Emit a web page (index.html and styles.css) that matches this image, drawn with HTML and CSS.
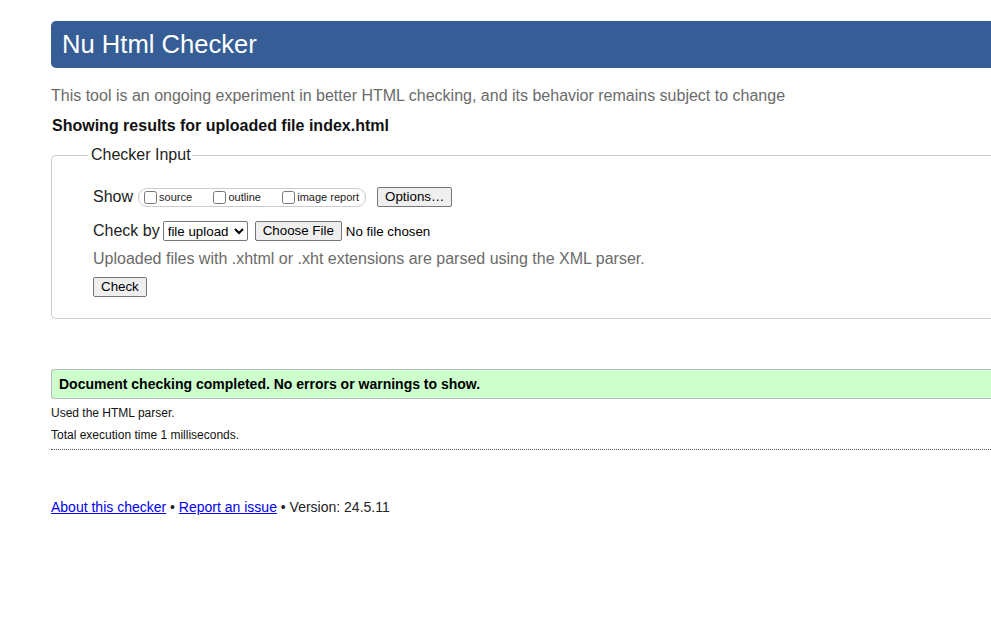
FILE: index.html
```html
<!DOCTYPE html>
<html lang="en">
<head>
<meta charset="utf-8">
<title>Showing results for uploaded file index.html - Nu Html Checker</title>
<link rel="stylesheet" href="styles.css">
</head>
<body>
<div class="page">
  <h1 class="banner">Nu Html Checker</h1>
  <p class="tagline">This tool is an ongoing experiment in better HTML checking, and its behavior remains subject to change</p>
  <p class="showing">Showing results for uploaded file index.html</p>

  <fieldset class="input-box">
    <legend>Checker Input</legend>
    <div class="row show-row">
      <span class="label">Show</span>
      <span class="opts">
        <label class="opt"><input type="checkbox">source</label>
        <label class="opt"><input type="checkbox">outline</label>
        <label class="opt"><input type="checkbox">image report</label>
      </span>
      <button class="btn">Options…</button>
    </div>
    <div class="row by-row">
      <span class="label">Check by</span>
      <select class="sel"><option>file upload</option></select>
      <button class="btn choose">Choose File</button>
      <span class="nofile">No file chosen</span>
    </div>
    <p class="hint">Uploaded files with .xhtml or .xht extensions are parsed using the XML parser.</p>
    <div class="row"><button class="btn">Check</button></div>
  </fieldset>

  <div class="success">Document checking completed. No errors or warnings to show.</div>
  <p class="stat">Used the HTML parser.</p>
  <p class="stat">Total execution time 1 milliseconds.</p>
  <div class="sep"></div>

  <p class="footer"><a href="#">About this checker</a> • <a href="#">Report an issue</a> • Version: 24.5.11</p>
</div>
</body>
</html>
```

FILE: styles.css
```css
html, body {
  margin: 0;
  padding: 0;
  background: #fff;
  overflow: hidden;
}
body {
  font-family: "Liberation Sans", Arial, sans-serif;
  color: #111;
}
.page {
  padding: 21px 0 0 51px;
  display: flex;
  flex-direction: column;
}
.banner {
  margin: 0;
  background: #365d96;
  color: #fff;
  font-weight: normal;
  font-size: 25.6px;
  line-height: 47px;
  height: 47px;
  padding-left: 11px;
  border-radius: 5px 0 0 5px;
}
.tagline {
  margin: 18px 0 0;
  font-size: 16px;
  line-height: 20px;
  color: #6b6b6b;
}
.showing {
  margin: 10px 0 0 1px;
  font-size: 16px;
  line-height: 20px;
  font-weight: bold;
  color: #111;
}
.input-box {
  margin: 10px 0 0;
  border: 1px solid #ccc;
  border-right: none;
  border-radius: 5px 0 0 5px;
  padding: 21px 0 21px 41px;
  min-inline-size: 0;
}
.input-box legend {
  margin-left: -5px;
  padding: 0 1px 0 3px;
  font-size: 16px;
  color: #222;
}
.row {
  display: flex;
  align-items: center;
}
.label {
  font-size: 16px;
  color: #222;
}
.show-row {
  height: 24px;
}
.show-row .label {
  margin-right: 5px;
}
.opts {
  display: inline-flex;
  align-items: center;
  height: 17px;
  border: 1px solid #ccc;
  border-radius: 9px;
  padding: 0 6px 0 5px;
  width: 215px;
  justify-content: space-between;
}
.opt {
  display: inline-flex;
  align-items: center;
  font-size: 11px;
  color: #222;
  margin-right: 8px;
}
.opt:last-child { margin-right: 0; }
.opt input {
  margin: 0 2px 0 0;
  width: 13px;
  height: 13px;
}
.btn {
  font-family: "Liberation Sans", Arial, sans-serif;
  font-size: 13.33px;
  line-height: 16px;
  background: #efefef;
  color: #000;
  border: 1px solid #767676;
  border-radius: 2px;
  padding: 1px 7px;
  margin: 0;
}
.show-row .btn {
  margin-left: 11px;
}
.by-row {
  margin-top: 10px;
  height: 24px;
}
.by-row .label {
  margin-right: 3px;
}
.sel {
  font-family: "Liberation Sans", Arial, sans-serif;
  font-size: 13.33px;
  height: 20px;
  width: 85px;
  border: 1px solid #767676;
  border-radius: 2px;
  background: #fff;
  color: #000;
  padding: 0;
  margin: 0 7px 0 0;
}
.choose {
  padding: 1px 7px;
}
.nofile {
  font-size: 13.33px;
  margin-left: 4px;
  color: #000;
}
.hint {
  margin: 5px 0 7px;
  font-size: 16px;
  line-height: 22px;
  color: #6b6b6b;
}
.success {
  margin-top: 50px;
  background: #ccffcc;
  border: 1px solid #bbb;
  border-right: none;
  border-radius: 3px 0 0 3px;
  padding: 0 0 0 7px;
  height: 28px;
  line-height: 28px;
  font-size: 14px;
  font-weight: bold;
  color: #000;
}
.stat {
  margin: 6px 0 0;
  font-size: 12px;
  line-height: 17px;
  color: #111;
}
.stat + .stat {
  margin-top: 5px;
}
.sep {
  margin-top: 5px;
  border-bottom: 1px dotted #555;
}
.footer {
  margin: 48px 0 0;
  font-size: 14px;
  line-height: 18px;
  color: #222;
}
.footer a {
  color: #00e;
}
```
